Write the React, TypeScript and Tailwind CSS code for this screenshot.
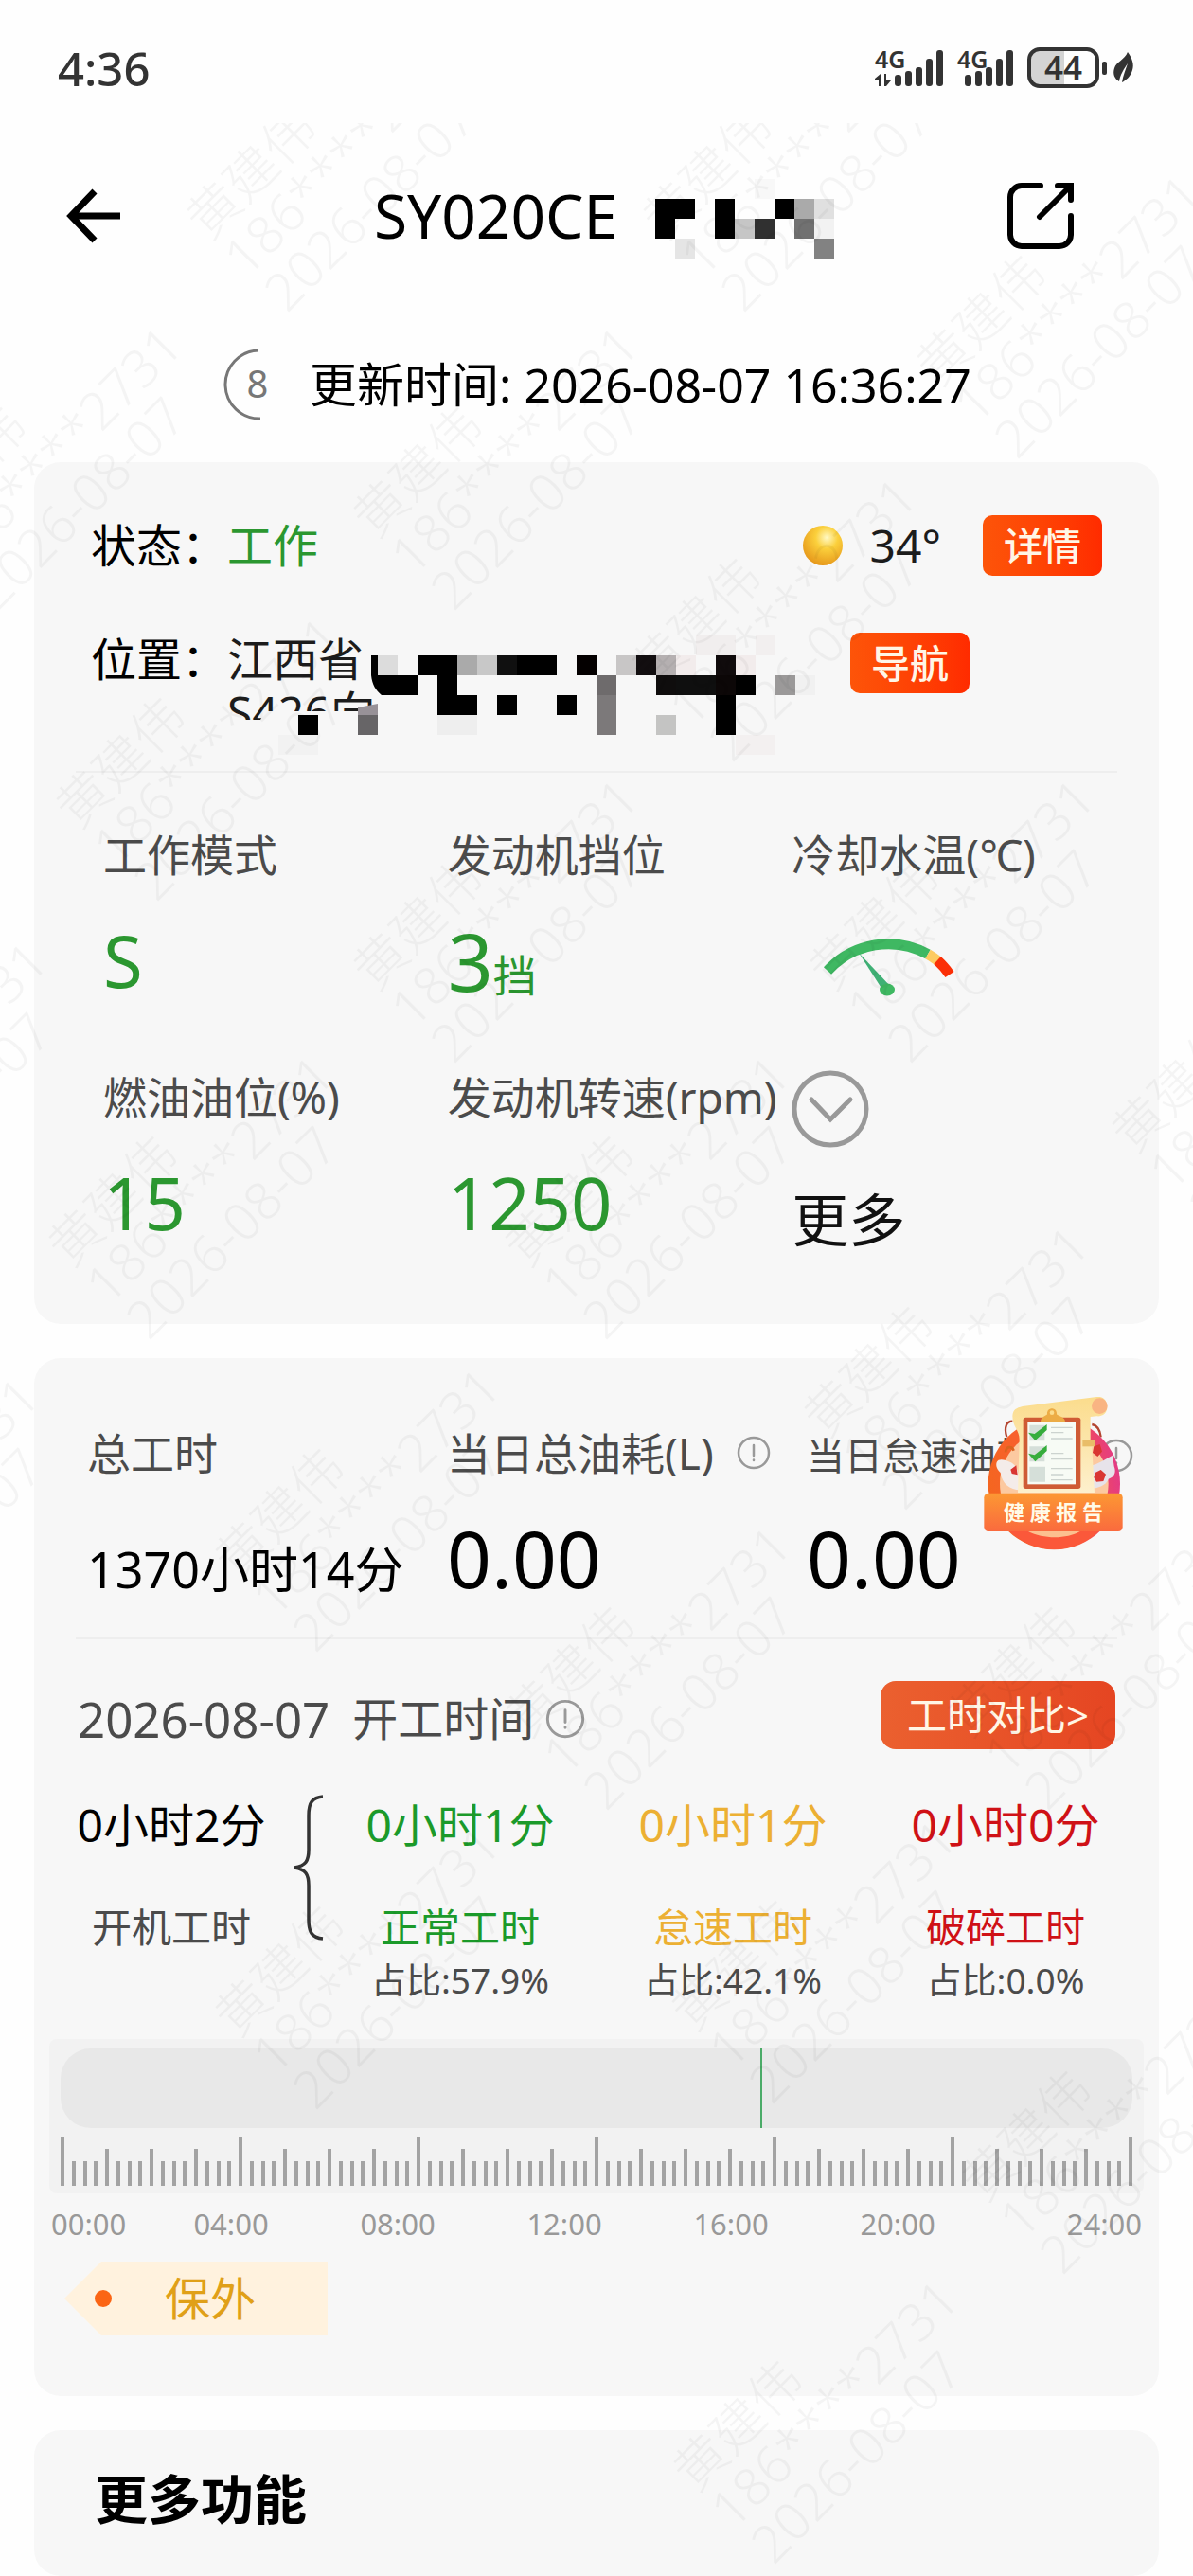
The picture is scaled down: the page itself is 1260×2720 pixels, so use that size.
import type { ReactNode } from "react";

type Cell = [col: number, row: number, fill: string];

// Redacted part of the serial number, one entry per 21px block
const serialBlocks: Cell[] = [
    [5, 0, "#f8f8f8"],
    [0, 1, "#000"], [1, 1, "#000"], [3, 1, "#000"], [6, 1, "#000"], [7, 1, "#aaa"], [8, 1, "#e0e0e0"],
    [0, 2, "#000"], [3, 2, "#000"], [4, 2, "#c6c6c6"], [5, 2, "#303030"], [7, 2, "#717171"], [8, 2, "#f2f2f2"],
    [1, 3, "#e5e5e5"], [8, 3, "#828282"],
];

// Redacted part of the address
const addressBlocks: Cell[] = [
    [20, 0, "#f1eeee"], [21, 0, "#f1eeee"], [23, 0, "#f2efef"],
    [4, 1, "#dcdcdc"], [6, 1, "#000"], [7, 1, "#000"], [8, 1, "#aaa"], [9, 1, "#c8c8c8"], [10, 1, "#101010"],
    [11, 1, "#000"], [12, 1, "#000"], [14, 1, "#040000"], [16, 1, "#c8c6c6"], [17, 1, "#120e10"],
    [18, 1, "#b5b0b1"], [19, 1, "#f2ecec"], [21, 1, "#100b0c"], [22, 1, "#f2ecec"],
    [5, 2, "#000"], [7, 2, "#000"], [15, 2, "#6e6b6c"], [18, 2, "#0f0d0d"], [19, 2, "#0f0f0f"], [20, 2, "#0f0f0f"],
    [21, 2, "#0c0707"], [22, 2, "#000"], [24, 2, "#9b9999"], [25, 2, "#f1f1f1"],
    [7, 3, "#000"], [8, 3, "#000"], [10, 3, "#000"], [13, 3, "#000"], [15, 3, "#7c797a"], [21, 3, "#000"],
    [0, 4, "#000"], [3, 4, "#676567"], [7, 4, "#eee"], [8, 4, "#eee"], [15, 4, "#7c797a"], [18, 4, "#c4c4c3"], [21, 4, "#000"],
    [-1, 5, "#f2f2f2"], [0, 5, "#f2f2f2"], [22, 5, "#f3f0f0"], [23, 5, "#f3f0f0"],
];

const workTimes = [
    { time: "0小时1分", label: "正常工时", ratio: "占比:57.9%", color: "text-[#1b9a2a]" },
    { time: "0小时1分", label: "怠速工时", ratio: "占比:42.1%", color: "text-[#ecb033]" },
    { time: "0小时0分", label: "破碎工时", ratio: "占比:0.0%", color: "text-[#cf1116]" },
];

const hours = ["00:00", "04:00", "08:00", "12:00", "16:00", "20:00", "24:00"];

// 24 hours, one tick per quarter
const ticks = Array.from({ length: 97 }, (_, i) => i);

const watermarks = [
    [310, 200], [792, 200], [1081, 355], [4, 515], [486, 515], [780, 675], [172, 822], [486, 993],
    [968, 993], [-138, 1165], [1287, 1165], [164, 1285], [646, 1285], [962, 1465], [-147, 1625], [340, 1615],
    [647, 1782], [1113, 1782], [340, 2098], [822, 2092], [1129, 2272], [824, 2578],
];

function Watermark() {
    return (
        <div className="pointer-events-none absolute inset-x-0 top-[130px] bottom-0 overflow-hidden" aria-hidden="true">
            <svg className="h-full w-full fill-black text-[55px] font-light opacity-[0.035]">
                {watermarks.map(([x, y]) => (
                    <g key={`${x}-${y}`} transform={`translate(${x} ${y}) rotate(-45)`}>
                        <text x="-10" y="-116">黄建伟</text>
                        <text x="-10" y="-60">186****2731</text>
                        <text x="-6" y="-4">2026-08-07</text>
                    </g>
                ))}
            </svg>
        </div>
    );
}

function Blocks({ cells }: { cells: Cell[] }) {
    return (
        <>
            {cells.map(([col, row, fill]) => (
                <rect key={`${col}-${row}`} x={col * 21} y={row * 21} width="21" height="21" fill={fill} shapeRendering="crispEdges" />
            ))}
        </>
    );
}

function Signal({ data }: { data?: boolean }) {
    return (
        <svg width={data ? 72 : 59} height="42" className="overflow-visible fill-[#333]">
            <text x="0" y="21" className="text-[25px] font-semibold">4G</text>
            {data && (
                <path d="M0 32 6 27V40H4V33H0ZM10 27H12V34H17L12 40H10Z" />
            )}
            {[28, 24, 20, 11, 2].map((y, i) => (
                <rect key={y} x={(data ? 21 : 8) + i * 11} y={y} width="7" height={40 - y} rx="3" />
            ))}
        </svg>
    );
}

function Battery() {
    return (
        <svg width="114" height="44" viewBox="0 0 114 44" className="overflow-visible">
            <path d="M14 2H39V42H14A12 12 0 0 1 2 30V14A12 12 0 0 1 14 2Z" fill="#d4d4d4" />
            <rect x="2" y="2" width="72" height="39" rx="11" fill="none" stroke="#333" strokeWidth="4" />
            <text x="38" y="34" textAnchor="middle" className="fill-[#333] text-[35px] font-semibold">44</text>
            <rect x="79" y="15" width="5" height="14" rx="2" fill="#333" />
            <path d="M106 5C111 12 113 18 111 24C109 31 104 35 100 37C101 30 104 23 106 17C102 23 98 29 97 36C92 33 90 28 92 22C94 15 103 13 106 5Z" fill="#333" />
        </svg>
    );
}

function InfoIcon({ size }: { size: number }) {
    return (
        <svg width={size} height={size} viewBox="0 0 36 36" className="shrink-0" fill="none" stroke="#999" strokeWidth="2.5" strokeLinecap="round">
            <circle cx="18" cy="18" r="16" />
            <path d="M18 10V21M18 25.500V26" />
        </svg>
    );
}

function Gauge() {
    return (
        <svg width="150" height="68" viewBox="866 988 150 68" className="ml-7" fill="none" strokeWidth="11">
            <path d="M876 1025A87 87 0 0 1 982 1007.500" stroke="#3fb862" />
            <path d="M982 1007.500A87 87 0 0 1 993 1015" stroke="#fdcb61" />
            <path d="M992 1014A87 87 0 0 1 1005 1029" stroke="#fb2f06" />
            <path d="M909 1006 943 1042 934 1045Z" fill="#3fb075" stroke="none" />
            <ellipse cx="939" cy="1045" rx="8" ry="6.500" fill="#3fb862" stroke="none" />
        </svg>
    );
}

function HealthReport() {
    return (
        <button type="button" className="absolute top-[41px] right-[38px] h-[162px] w-[147px]">
            <svg width="147" height="162" viewBox="177 105 441 486" aria-hidden="true">
                <defs>
                    <linearGradient id="ring" x1="0" x2="1" y1="0.6" y2="0.4">
                        <stop offset="0" stopColor="#f4661f" />
                        <stop offset="0.6" stopColor="#fb5a3c" />
                        <stop offset="1" stopColor="#e33a86" />
                    </linearGradient>
                    <linearGradient id="ribbon" x1="0" x2="0" y1="0" y2="1">
                        <stop offset="0" stopColor="#fc9833" />
                        <stop offset="1" stopColor="#fa6a3e" />
                    </linearGradient>
                    <linearGradient id="scroll" x1="0" x2="0" y1="0" y2="1">
                        <stop offset="0" stopColor="#fbdc8c" />
                        <stop offset="1" stopColor="#fdf0cd" />
                    </linearGradient>
                </defs>
                <path d="M250 232C240 200 250 182 268 182M548 232C545 205 535 195 520 192" fill="none" stroke="#b3442f" strokeWidth="7" />
                <circle cx="400" cy="380" r="209" fill="url(#ring)" />
                <circle cx="400" cy="380" r="172" fill="#fcc9a0" />
                <path d="M218 312C225 298 245 305 262 312C285 325 290 345 292 400C260 400 235 380 230 345C220 335 214 325 218 312Z" fill="#f4ece9" />
                <path d="M585 290C560 305 535 318 520 322L512 395C540 395 565 385 572 365C590 360 598 345 590 325Z" fill="#e7e3ea" />
                <path d="M268 165C270 145 280 140 300 135L535 105C560 102 570 120 567 145C564 160 550 168 535 166L515 168V240L530 245V262L520 265L528 408H285L290 240C290 210 268 200 268 165Z" fill="url(#scroll)" />
                <path d="M490 240H530V262H490Z" fill="#e9bd68" />
                <circle cx="544" cy="134" r="25" fill="#f9b483" />
                <path d="M246 280C248 262 265 258 272 275" fill="none" stroke="#d9641f" strokeWidth="8" />
                <rect x="302" y="170" width="182" height="226" rx="8" fill="#cf5b35" />
                <rect x="316" y="184" width="152" height="198" fill="#f7fbf5" />
                <path d="M357 184C357 168 374 166 378 160C376 136 410 136 408 160C412 166 435 168 435 184Z" fill="#ecac45" />
                <circle cx="393" cy="155" r="7" fill="#fbdc8c" />
                <path d="M322 194H370V244H322ZM322 262H370V310H322ZM322 326H372V374H322Z" fill="#d5dfd9" />
                <path d="M318 218 338 222 377 192V210L340 243ZM318 284 338 289 377 258V276L340 310Z" fill="#36ad3c" />
                <path d="M390 202H458M390 218H430M390 237H458M390 284H430M390 302H458M390 332H458M390 351H430M390 368H458" stroke="#ccd3cf" strokeWidth="4" />
                <path d="M526 262 545 255 552 278 538 294 522 282ZM262 335 280 322 284 352 266 348ZM530 345 548 336 564 350 556 372 534 374 526 360Z" fill="#d93632" />
                <rect x="178" y="410" width="439" height="121" rx="14" fill="url(#ribbon)" />
                <path d="M258 531H541C505 565 455 588 400 588C345 588 295 565 258 531Z" fill="#fb583a" />
                <path d="M318 531H482C440 556 365 556 318 531Z" fill="#fcc08f" />
            </svg>
            <span className="absolute inset-x-0 top-[101px] text-center text-[22px] leading-[40px] font-bold text-[#fffbe9]">
                健 康 报 告
            </span>
        </button>
    );
}

function Card({ className = "", children }: { className?: string; children: ReactNode }) {
    return <section className={`relative mx-9 rounded-[28px] bg-[#f7f7f7] ${className}`}>{children}</section>;
}

function Metric({ label, children }: { label: string; children: ReactNode }) {
    return (
        <div>
            <h3 className="text-[46px] leading-[56px] whitespace-nowrap text-[#4b4b4b]">{label}</h3>
            <div className="mt-9 flex h-24 items-center text-[76px] leading-[96px] text-[#2b9730]">{children}</div>
        </div>
    );
}

export default function App() {
    return (
        <div
            lang="zh-CN"
            className="relative flex min-h-screen flex-col overflow-hidden bg-[#fefefe] font-['Noto_Sans','Noto_Sans_CJK_SC',sans-serif] text-black"
        >
            <div className="flex h-36 items-center justify-between px-[61px]">
                <span className="text-[49px] leading-[56px] font-medium text-[#333]">4:36</span>
                <div className="flex items-center gap-[15px]">
                    <Signal data />
                    <Signal />
                    <Battery />
                </div>
            </div>

            <header className="flex h-[168px] items-center justify-between pr-[126px] pl-[70px]">
                <button type="button" aria-label="返回">
                    <svg width="58" height="58" viewBox="0 0 58 58" fill="none" stroke="#000" strokeWidth="7">
                        <path d="M30 3 5 29 30 55M5 29H57" />
                    </svg>
                </button>
                <h1 className="ml-[84px] flex items-center gap-10 text-[64px] leading-[80px]">
                    SY020CE
                    <svg width="189" height="90" viewBox="0 -6 189 90" aria-hidden="true">
                        <Blocks cells={serialBlocks} />
                    </svg>
                </h1>
                <button type="button" aria-label="分享">
                    <svg width="70" height="70" viewBox="0 0 70 70" fill="none" stroke="#000" strokeWidth="6" strokeLinecap="round">
                        <path d="M35 3H15A12 12 0 0 0 3 15V55A12 12 0 0 0 15 67H55A12 12 0 0 0 67 55V35" />
                        <path d="M53 3H67V18M66 4 34 36" />
                    </svg>
                </button>
            </header>

            <div className="flex h-44 items-center gap-10 pt-3 pl-[231px]">
                <svg width="56" height="76" viewBox="0 0 56 76" className="overflow-visible">
                    <path d="M42 2A36 36 0 0 0 44 74" fill="none" stroke="#777" strokeWidth="3" />
                    <text x="41" y="52" textAnchor="middle" className="fill-[#777] text-[40px]">8</text>
                </svg>
                <p className="text-[50px] leading-[64px]">更新时间: 2026-08-07 16:36:27</p>
            </div>

            <Card className="pt-14 pb-[62px]">
                <div className="flex h-16 items-center px-[60px] text-[48px]">
                    <span>状态：</span>
                    <span className="text-[#2b9730]">工作</span>
                    <svg width="44" height="44" viewBox="0 0 44 44" className="ml-auto" aria-hidden="true">
                        <defs>
                            <radialGradient id="sun" cx="0.6" cy="0.3" r="0.7">
                                <stop offset="0" stopColor="#fff9c4" />
                                <stop offset="0.4" stopColor="#fbd03c" />
                                <stop offset="1" stopColor="#e79a1c" />
                            </radialGradient>
                        </defs>
                        <circle cx="22" cy="22" r="21" fill="url(#sun)" />
                    </svg>
                    <span className="ml-7 text-[#1c1c1c]">34°</span>
                    <button type="button" className="ml-11 h-16 w-[126px] rounded-[10px] bg-linear-to-r from-[#fd5409] to-[#ff2b00] text-[41px] leading-[64px] font-medium text-[#fff6e6]">
                        详情
                    </button>
                </div>
                <div className="mt-[60px] flex items-start pr-[200px] pl-[60px] text-[48px] leading-[56px]">
                    <span>位置：</span>
                    <div className="relative flex-1 text-[#1c1c1c]">
                        <p>江西省</p>
                        <p>S426向</p>
                        <svg width="640" height="138" viewBox="-75 -3 640 138" className="absolute top-0 left-0" aria-hidden="true">
                            <path d="M-75 89H-40L-35 80H95V124H-75Z" fill="#f7f7f7" />
                            <path d="M77 21V42C78 52 82 58 88 63H105V42H84V21Z" fill="#000" />
                            <path d="M63 76 84 72V84H63Z" fill="#989298" />
                            <Blocks cells={addressBlocks} />
                        </svg>
                    </div>
                    <button type="button" className="h-16 w-[126px] rounded-[10px] bg-linear-to-r from-[#fd5409] to-[#ff2b00] text-[41px] leading-[64px] font-medium text-[#fff6e6]">
                        导航
                    </button>
                </div>
                <hr className="mx-11 mt-[34px] border-t-2 border-[#eee]" />

                <div className="mt-[58px] mr-6 ml-[73px] grid grid-cols-3 gap-y-[68px]">
                    <Metric label="工作模式">S</Metric>
                    <Metric label="发动机挡位">
                        <p className="pt-4 text-[84px]">
                            3<span className="text-[46px]">挡</span>
                        </p>
                    </Metric>
                    <Metric label="冷却水温(℃)">
                        <div className="pt-4">
                            <Gauge />
                        </div>
                    </Metric>
                    <Metric label="燃油油位(%)">15</Metric>
                    <Metric label="发动机转速(rpm)">1250</Metric>
                    <button type="button" className="flex flex-col items-start gap-7">
                        <svg width="84" height="82" viewBox="0 0 84 82" fill="none" stroke="#999" strokeWidth="5">
                            <circle cx="41" cy="41" r="38" />
                            <path d="M21 31 41 52 62 31" strokeLinecap="round" />
                        </svg>
                        <span className="text-[60px] leading-[96px] text-[#111]">更多</span>
                    </button>
                </div>
            </Card>

            <Card className="mt-9 pt-[72px] pb-16">
                <div className="ml-14 grid grid-cols-[380fr_380fr_372fr] items-baseline gap-y-8 whitespace-nowrap">
                    <h3 className="text-[46px] leading-[56px] text-[#4b4b4b]">总工时</h3>
                    <h3 className="flex items-center gap-6 text-[46px] leading-[56px] text-[#4b4b4b]">
                        当日总油耗(L)
                        <InfoIcon size={36} />
                    </h3>
                    <h3 className="flex items-center gap-6 text-[40px] leading-[56px] text-[#4b4b4b]">
                        当日怠速油耗(L)
                        <InfoIcon size={36} />
                    </h3>
                    <p className="text-[52px] leading-[96px]">1370小时14分</p>
                    <p className="text-[82px] leading-[96px]">0.00</p>
                    <p className="text-[82px] leading-[96px]">0.00</p>
                </div>
                <HealthReport />
                <hr className="mx-11 mt-6 border-t-2 border-[#eee]" />

                <div className="mt-11 flex items-end px-[46px]">
                    <h3 className="flex items-center text-[51px] leading-[64px] text-[#4b4b4b]">
                        <span className="mr-6">2026-08-07</span>
                        <span className="mr-3 text-[48px]">开工时间</span>
                        <InfoIcon size={42} />
                    </h3>
                    <button type="button" className="ml-auto h-[72px] w-[248px] rounded-[16px] bg-linear-to-r from-[#eb602f] to-[#e54522] text-[42px] leading-[72px] text-[#fff6e6]">
                        工时对比&gt;
                    </button>
                </div>

                <div className="mt-12 mr-[18px] ml-11 flex text-center">
                    <div className="w-[202px] pt-1">
                        <p className="text-[48px] leading-[56px]">0小时2分</p>
                        <p className="mt-14 text-[42px] leading-[48px] text-[#4b4b4b]">开机工时</p>
                    </div>
                    <svg width="32" height="154" viewBox="0 0 32 154" className="ml-7" fill="none" stroke="#333" strokeWidth="3.5">
                        <path d="M31 2C20 3 16 8 16 22V58C16 70 13 75 1 77C13 79 16 84 16 96V132C16 146 20 151 31 152" />
                    </svg>
                    <div className="grid flex-1 grid-cols-3 pt-1">
                        {workTimes.map((item) => (
                            <div key={item.label} className={item.color}>
                                <p className="text-[48px] leading-[56px]">{item.time}</p>
                                <p className="mt-14 text-[42px] leading-[48px]">{item.label}</p>
                                <p className="mt-2 text-[37px] leading-[48px] text-[#4b4b4b]">{item.ratio}</p>
                            </div>
                        ))}
                    </div>
                </div>

                {/* Timeline */}
                <div className="mx-4 mt-[38px] rounded-lg bg-[#f2f2f2] px-3 pt-[10px] pb-2">
                    <div className="relative h-[84px] rounded-[32px] bg-[#e8e8e8]">
                        <div className="absolute inset-y-0 left-[65.3%] w-[2px] bg-[#4bab68]" />
                    </div>
                    <div className="mt-[9px] flex h-[52px] items-end justify-between">
                        {ticks.map((i) => (
                            <span
                                key={i}
                                className={`w-1 bg-[#a3a3a3] ${i % 16 === 0 ? "h-[52px]" : i % 4 === 0 ? "h-[39px]" : "h-[26px]"}`}
                            />
                        ))}
                    </div>
                </div>
                <div className="mx-[18px] mt-3 grid grid-cols-[102fr_repeat(5,176fr)_170fr] text-center text-[31px] leading-[40px] text-[#999]">
                    {hours.map((hour) => (
                        <span key={hour} className="first:text-left last:text-right">{hour}</span>
                    ))}
                </div>

                <div className="mt-5 ml-8 flex h-[78px] w-[278px] items-center bg-[#fff2de] pl-8 text-[48px] text-[#e0a018] [clip-path:polygon(0_50%,14%_0,100%_0,100%_100%,14%_100%)]">
                    <span className="mr-14 h-[18px] w-[18px] rounded-full bg-[#fb6514]" />
                    保外
                </div>
            </Card>

            <Card className="mt-9 flex-1 pt-9 pb-9 pl-16">
                <h2 className="text-[56px] leading-[72px] font-bold">更多功能</h2>
            </Card>

            <Watermark />
        </div>
    );
}
